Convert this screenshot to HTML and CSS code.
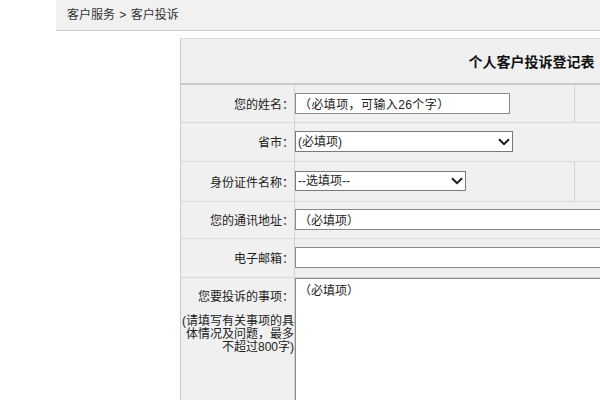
FILE: index.html
```html
<!DOCTYPE html>
<html lang="zh-CN">
<head>
<meta charset="utf-8">
<title>客户投诉</title>
<link rel="stylesheet" href="styles.css">
</head>
<body>
<div class="page">
  <div class="crumb">客户服务 &gt; 客户投诉</div>
  <div class="form-wrap">
    <table class="form">
      <colgroup>
        <col class="c-label">
        <col class="c-field">
        <col class="c-extra">
      </colgroup>
      <tr class="head"><th colspan="3">个人客户投诉登记表</th></tr>
      <tr class="r-name">
        <td class="lbl">您的姓名：</td>
        <td class="fld"><input class="in in-name" type="text" value="（必填项，可输入26个字）"></td>
        <td class="extra"></td>
      </tr>
      <tr class="r-prov">
        <td class="lbl">省市：</td>
        <td class="fld" colspan="2">
          <span class="sel-wrap sel-prov">
            <select class="sel"><option>(必填项)</option></select>
            <svg class="chev" width="12" height="8" viewBox="0 0 12 8"><polyline points="1,1.2 6,6.2 11,1.2" fill="none" stroke="#1a1a1a" stroke-width="2"/></svg>
          </span>
        </td>
      </tr>
      <tr class="r-id">
        <td class="lbl">身份证件名称：</td>
        <td class="fld">
          <span class="sel-wrap sel-id">
            <select class="sel"><option>--选填项--</option></select>
            <svg class="chev" width="12" height="8" viewBox="0 0 12 8"><polyline points="1,1.2 6,6.2 11,1.2" fill="none" stroke="#1a1a1a" stroke-width="2"/></svg>
          </span>
        </td>
        <td class="extra"></td>
      </tr>
      <tr class="r-addr">
        <td class="lbl">您的通讯地址：</td>
        <td class="fld" colspan="2"><input class="in in-wide" type="text" value="（必填项）"></td>
      </tr>
      <tr class="r-mail">
        <td class="lbl">电子邮箱：</td>
        <td class="fld" colspan="2"><input class="in in-wide" type="text" value=""></td>
      </tr>
      <tr class="r-msg">
        <td class="lbl lbl-top">
          <div class="lbl-main">您要投诉的事项：</div>
          <div class="lbl-note">(请填写有关事项的具<br>体情况及问题，最多<br>不超过800字)</div>
        </td>
        <td class="fld fld-top" colspan="2"><textarea class="ta">（必填项）</textarea></td>
      </tr>
    </table>
  </div>
</div>
</body>
</html>
```
FILE: styles.css
```css
html, body {
  margin: 0;
  padding: 0;
  overflow: hidden;
  background: #ffffff;
}
body {
  font-family: "Liberation Sans", "Noto Sans CJK SC", sans-serif;
  font-size: 12px;
  color: #222;
}
.page {
  width: 600px;
  height: 400px;
  overflow: hidden;
}
.crumb {
  margin-left: 56px;
  width: 600px;
  height: 30px;
  line-height: 30px;
  padding-left: 11px;
  background: #f1f1f1;
  border-bottom: 1px solid #cfcfcf;
  color: #333;
  font-size: 12px;
  word-spacing: 1px;
}
.form-wrap {
  margin-top: 7px;
  margin-left: 180px;
}
.form {
  width: 702px;
  border-collapse: collapse;
  table-layout: fixed;
  background: #f0f0f0;
  border-left: 1px solid #c9c9c9;
  border-top: 1px solid #d9d9d9;
}
.c-label { width: 114px; }
.c-field { width: 280px; }
.head th {
  height: 44px;
  padding: 0;
  font-size: 14px;
  font-weight: bold;
  color: #111;
  text-align: center;
  border-bottom: 2px solid #cacaca;
}
.form td {
  padding: 0;
  border-bottom: 1px solid #d8d8d8;
  vertical-align: middle;
}
.form td.lbl-top,
.form td.fld-top {
  vertical-align: top;
}
.lbl {
  text-align: right;
  color: #222;
  border-right: 1px solid #d2d2d2;
  white-space: nowrap;
}
.extra {
  border-left: 1px solid #d2d2d2;
}
.r-name { height: 38px; }
.r-prov { height: 39px; }
.r-id { height: 40px; }
.r-addr { height: 37px; }
.r-mail { height: 39px; }
.r-msg { height: 160px; }

.in {
  box-sizing: border-box;
  height: 21px;
  margin: 0;
  border: 1px solid #8a8a8a;
  background: #fff;
  font-family: "Liberation Sans", "Noto Sans CJK SC", sans-serif;
  font-size: 12px;
  color: #222;
  padding: 0 3px;
  display: block;
  outline: none;
}
.in-name { width: 215px; letter-spacing: 0.4px; }
.in-wide { width: 420px; }

.sel-wrap {
  position: relative;
  display: block;
}
.sel {
  box-sizing: border-box;
  -webkit-appearance: none;
  appearance: none;
  display: block;
  height: 21px;
  margin: 0;
  padding: 0 0 0 2px;
  border: 1px solid #7a7a7a;
  border-radius: 0;
  background: #fff;
  font-family: "Liberation Sans", "Noto Sans CJK SC", sans-serif;
  font-size: 12px;
  color: #222;
}
.sel-prov .sel { width: 218px; }
.sel-id .sel { width: 171px; height: 20px; }
.chev {
  position: absolute;
  top: 7px;
  pointer-events: none;
}
.sel-prov .chev { left: 203px; }
.sel-id .chev { left: 156px; top: 6px; }

.lbl-main {
  padding-top: 11px;
  line-height: 16px;
}
.lbl-note {
  margin-top: 10px;
  line-height: 13px;
  white-space: nowrap;
}
.ta {
  box-sizing: border-box;
  display: block;
  width: 420px;
  height: 160px;
  margin: 0;
  border: 1px solid #8a8a8a;
  background: #fff;
  padding: 5px 3px;
  font-family: "Liberation Sans", "Noto Sans CJK SC", sans-serif;
  font-size: 12px;
  line-height: 14px;
  color: #222;
  resize: none;
  outline: none;
}
```
